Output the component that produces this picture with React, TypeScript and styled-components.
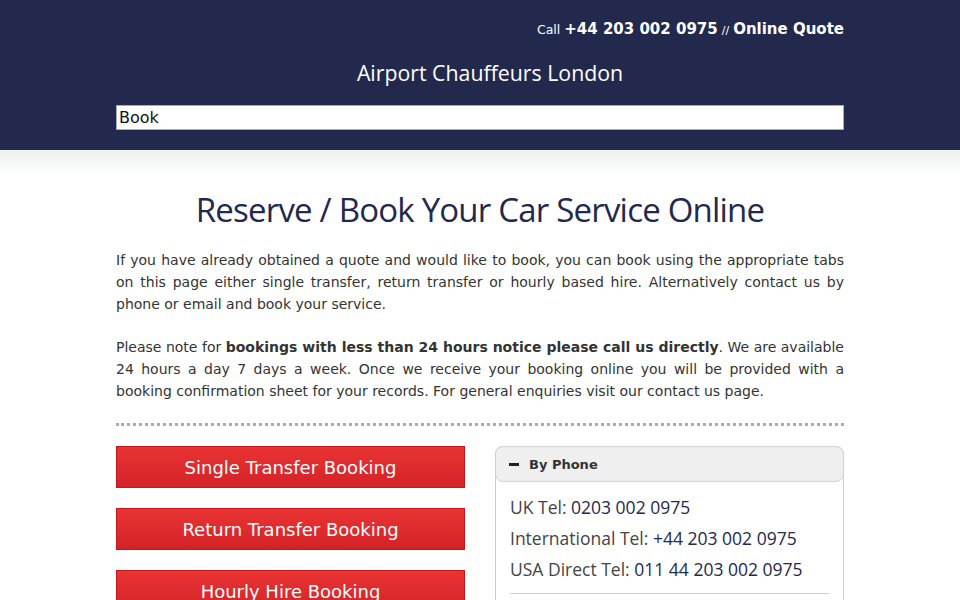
import React from "react";
import styled, { createGlobalStyle } from "styled-components";

const GlobalStyle = createGlobalStyle`
  html, body {
    margin: 0;
    padding: 0;
    background: #fff;
  }
  body {
    font-family: "DejaVu Sans", sans-serif;
    color: #333;
  }
`;

const Header = styled.header`
  background: #23294d;
  height: 150px;
  box-sizing: border-box;
  padding-top: 19px;
`;

const Inner = styled.div`
  width: 728px;
  margin: 0 auto;
`;

const TopLine = styled.div`
  text-align: right;
  color: #fff;
  font-size: 12.5px;
  line-height: 20px;
  height: 20px;
`;

const Strong = styled.a`
  font-weight: bold;
  font-size: 15px;
  color: #fff;
  text-decoration: none;
`;

const Sep = styled.span`
  font-size: 11px;
  margin: 0 4px;
`;

const SiteName = styled.div`
  text-align: center;
  color: #fff;
  font-family: "Open Sans", sans-serif;
  font-size: 21.3px;
  line-height: 30px;
  margin-top: 19px;
  padding-left: 20px;
`;

const Search = styled.input`
  display: block;
  width: 100%;
  box-sizing: border-box;
  height: 25px;
  margin-top: 17px;
  border: 1px solid #aab;
  background: #fff;
  padding: 0 2px;
  font-family: "DejaVu Sans", sans-serif;
  font-size: 16px;
  color: #111;
  outline: none;
`;

const Shade = styled.div`
  height: 26px;
  background: linear-gradient(#eef0ef, #fff);
`;

const Main = styled.main`
  width: 728px;
  margin: 0 auto;
`;

const Title = styled.h1`
  margin: 12px 0 0;
  text-align: center;
  font-family: "Open Sans", sans-serif;
  font-weight: normal;
  font-size: 33px;
  letter-spacing: -0.8px;
  line-height: 44px;
  color: #23294d;
`;

const Para = styled.p`
  margin: 0 0 21px;
  font-size: 14px;
  line-height: 22px;
  text-align: justify;
  color: #333;
  &:first-of-type {
    margin-top: 17px;
  }
`;

const Divider = styled.hr`
  border: none;
  border-top: 3px dotted #aaa;
  margin: 20px 0 20px;
`;

const Columns = styled.div`
  display: grid;
  grid-template-columns: 349px 349px;
  justify-content: space-between;
`;

const ButtonStack = styled.div`
  display: flex;
  flex-direction: column;
  gap: 20px;
`;

const BookButton = styled.button`
  height: 42px;
  border: 1px solid #c4161c;
  background: linear-gradient(#ea3434, #d32227);
  color: #fff;
  font-family: "DejaVu Sans", sans-serif;
  font-size: 18px;
  cursor: pointer;
  padding: 0;
`;

const Panel = styled.div`
  border: 1px solid #ccc;
  border-radius: 8px;
  height: 300px;
`;

const PanelHead = styled.div`
  display: flex;
  align-items: center;
  gap: 10px;
  height: 34px;
  margin: -1px;
  padding: 0 13px;
  background: #efefef;
  border: 1px solid #d2d2d2;
  border-radius: 8px;
  font-size: 13px;
  font-weight: bold;
  color: #333;
`;

const Minus = styled.span`
  display: inline-block;
  width: 10px;
  height: 3px;
  background: #222;
`;

const PanelBody = styled.div`
  padding: 11px 14px 0;
`;

const PhoneLine = styled.div`
  font-family: "Open Sans", sans-serif;
  font-size: 17.5px;
  line-height: 31px;
  color: #444;
  white-space: nowrap;
`;

const Num = styled.span`
  color: #23294d;
`;

const Rule = styled.div`
  border-top: 1px solid #ccc;
  margin-top: 8px;
`;

export default function App() {
  const phones = [
    ["UK Tel:", "0203 002 0975"],
    ["International Tel:", "+44 203 002 0975"],
    ["USA Direct Tel:", "011 44 203 002 0975"],
  ];

  return (
    <>
      <GlobalStyle />
      <Header>
        <Inner>
          <TopLine>
            Call <Strong href="#">+44 203 002 0975</Strong>
            <Sep>//</Sep>
            <Strong href="#">Online Quote</Strong>
          </TopLine>
          <SiteName>Airport Chauffeurs London</SiteName>
          <Search defaultValue="Book" />
        </Inner>
      </Header>
      <Shade />
      <Main>
        <Title>Reserve / Book Your Car Service Online</Title>
        <Para>
          If you have already obtained a quote and would like to book, you can book using the
          appropriate tabs on this page either single transfer, return transfer or hourly based
          hire. Alternatively contact us by phone or email and book your service.
        </Para>
        <Para>
          Please note for <b>bookings with less than 24 hours notice please call us directly</b>.
          We are available 24 hours a day 7 days a week. Once we receive your booking online you
          will be provided with a booking confirmation sheet for your records. For general
          enquiries visit our contact us page.
        </Para>
        <Divider />
        <Columns>
          <ButtonStack>
            <BookButton>Single Transfer Booking</BookButton>
            <BookButton>Return Transfer Booking</BookButton>
            <BookButton>Hourly Hire Booking</BookButton>
          </ButtonStack>
          <Panel>
            <PanelHead>
              <Minus />
              By Phone
            </PanelHead>
            <PanelBody>
              {phones.map(([label, num]) => (
                <PhoneLine key={label}>
                  {label} <Num>{num}</Num>
                </PhoneLine>
              ))}
              <Rule />
            </PanelBody>
          </Panel>
        </Columns>
      </Main>
    </>
  );
}
